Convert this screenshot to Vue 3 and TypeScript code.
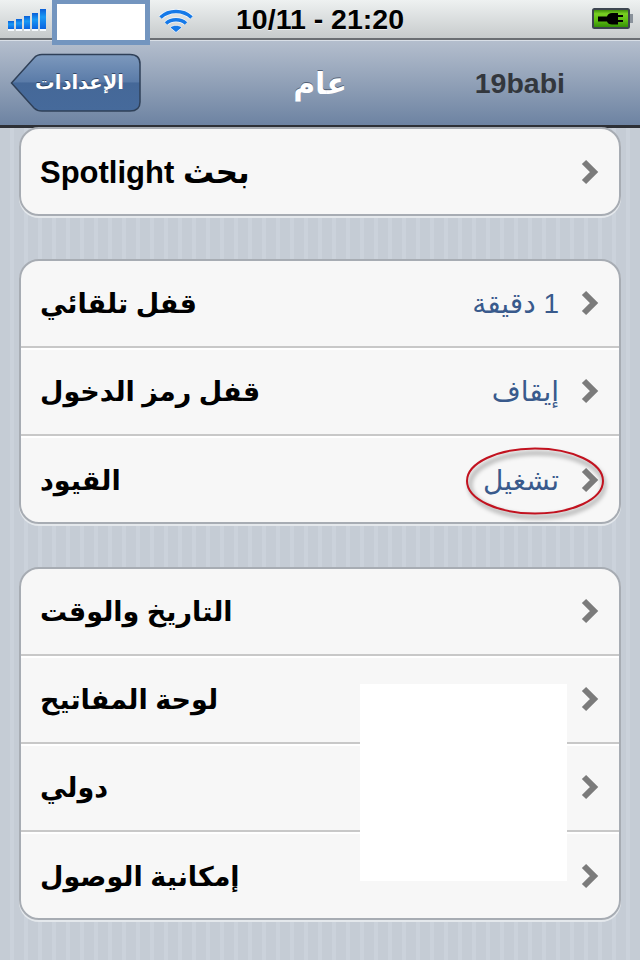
<script setup lang="ts">
interface Row {
  label: string
  value?: string
}

const groups: Row[][] = [
  [{ label: "بحث Spotlight" }],
  [
    { label: "قفل تلقائي", value: "1 دقيقة" },
    { label: "قفل رمز الدخول", value: "إيقاف" },
    { label: "القيود", value: "تشغيل" },
  ],
  [
    { label: "التاريخ والوقت" },
    { label: "لوحة المفاتيح" },
    { label: "دولي" },
    { label: "إمكانية الوصول" },
  ],
]

const bars = [
  { x: 8, y: 21 },
  { x: 16, y: 19 },
  { x: 24, y: 16 },
  { x: 32, y: 13 },
  { x: 40, y: 9 },
]
</script>

<template>
  <div class="phone">
    <header class="status">
      <svg class="signal" width="48" height="34" viewBox="0 0 48 34">
        <defs>
          <linearGradient id="barFill" x1="0" y1="0" x2="0" y2="1">
            <stop offset="0" stop-color="#0a5fd8" />
            <stop offset="0.4" stop-color="#1a9af5" />
            <stop offset="1" stop-color="#0a63e0" />
          </linearGradient>
        </defs>
        <g v-for="b in bars" :key="b.x">
          <rect :x="b.x" :y="b.y" width="6" :height="29 - b.y" fill="url(#barFill)" />
          <rect :x="b.x" y="29" width="6" height="2" fill="#f6fafd" />
        </g>
      </svg>
      <svg class="wifi" width="36" height="30" viewBox="0 0 36 30">
        <g fill="none" stroke="#f4f8fc" stroke-width="5">
          <path d="M2.500 11.500 C11 3.500 25 3.500 33.500 11.500" />
          <path d="M8 17.500 C13.500 12.500 22.500 12.500 28 17.500" />
        </g>
        <g fill="none" stroke="#1579e8" stroke-width="3.600">
          <path d="M2.500 11.500 C11 3.500 25 3.500 33.500 11.500" />
          <path d="M8 17.500 C13.500 12.500 22.500 12.500 28 17.500" />
        </g>
        <path d="M18 26.500 L12 21.500 C15.500 18.500 20.500 18.500 24 21.500 Z" fill="#1579e8" stroke="#f4f8fc" stroke-width="0.800" />
      </svg>
      <span class="time">10/11 - 21:20</span>
      <svg class="battery" width="42" height="22" viewBox="0 0 42 22">
        <defs>
          <linearGradient id="battFill" x1="0" y1="0" x2="0" y2="1">
            <stop offset="0" stop-color="#2f7d06" />
            <stop offset="0.25" stop-color="#79cf22" />
            <stop offset="0.6" stop-color="#5dbd12" />
            <stop offset="1" stop-color="#2f8a05" />
          </linearGradient>
        </defs>
        <rect x="1" y="1" width="36" height="19" rx="1.500" fill="url(#battFill)" stroke="#3d4550" stroke-width="2" />
        <rect x="38" y="6" width="3" height="9" fill="#8a929b" />
        <path d="M6 8.500 H15 Q16 5 20 5 H26 V7 H31 V9 H26 V12 H31 V14 H26 V16.500 H20 Q16 16.500 15 13.500 H6 Z" fill="#000" />
      </svg>
    </header>

    <nav class="nav">
      <button class="back" type="button">
        <svg class="back-shape" width="132" height="60" viewBox="0 0 132 60">
          <defs>
            <linearGradient id="backFill" x1="0" y1="0" x2="0" y2="1">
              <stop offset="0" stop-color="#7d99bd" />
              <stop offset="0.49" stop-color="#5a7ba8" />
              <stop offset="0.5" stop-color="#456898" />
              <stop offset="1" stop-color="#466a9b" />
            </linearGradient>
          </defs>
          <path
            d="M1.500 30 L24 5 Q27 1.500 32 1.500 H120 Q130 1.500 130 11 V49 Q130 58 120 58 H32 Q27 58 24 55 Z"
            fill="url(#backFill)"
            stroke="#2f4058"
            stroke-width="1.500"
          />
        </svg>
        <span class="back-label" dir="rtl">الإعدادات</span>
      </button>
      <h1 class="title" dir="rtl">عام</h1>
      <span class="owner">19babi</span>
    </nav>

    <main class="content">
      <section v-for="(group, i) in groups" :key="i" class="group">
        <div v-for="row in group" :key="row.label" class="row">
          <span class="label" :class="{ 'label-latin': i === 0 }" dir="rtl">{{ row.label }}</span>
          <span class="right">
            <span v-if="row.value" class="value" dir="rtl">{{ row.value }}</span>
            <svg class="chevron" width="18" height="26" viewBox="0 0 18 26">
              <path d="M3 3 L13 13 L3 23" fill="none" stroke="#7b7b7b" stroke-width="6" />
            </svg>
          </span>
        </div>
      </section>
    </main>

    <!-- things painted over the screenshot -->
    <div class="cover-status"></div>
    <div class="cover-list"></div>
    <svg class="circle" width="160" height="90" viewBox="0 0 160 90">
      <ellipse cx="82" cy="49" rx="67" ry="32" fill="none" stroke="#000" stroke-opacity="0.28" stroke-width="4" class="circle-shadow" />
      <ellipse cx="80" cy="45" rx="68" ry="32.500" fill="none" stroke="#c2121f" stroke-width="2" />
    </svg>
  </div>
</template>

<style>
html,
body {
  margin: 0;
  background: #c5ccd5;
}
</style>

<style scoped>
.phone {
  position: relative;
  width: 640px;
  height: 960px;
  overflow: hidden;
  display: flex;
  flex-direction: column;
  font-family: "Liberation Sans", "DejaVu Sans", sans-serif;
  background: repeating-linear-gradient(90deg, #c5ccd5 0 10px, #cbd2db 10px 14px);
}

.status {
  flex: none;
  height: 38px;
  position: relative;
  display: flex;
  align-items: center;
  background: linear-gradient(#eef1f1, #c7cbcc);
  border-bottom: 2px solid #6b6f73;
}

.signal {
  position: absolute;
  left: 0;
  top: 0;
}

.wifi {
  position: absolute;
  left: 158px;
  top: 6px;
}

.time {
  margin: 0 auto;
  padding-top: 1px;
  font-size: 28.5px;
  font-weight: 700;
  color: #000;
  text-shadow: 0 1px 0 rgba(255, 255, 255, 0.6);
}

.battery {
  position: absolute;
  left: 592px;
  top: 8px;
}

.nav {
  flex: none;
  height: 84px;
  display: grid;
  grid-template-columns: 1fr auto 1fr;
  align-items: center;
  padding: 0 10px;
  background: linear-gradient(#b4becd, #6d83a2);
  border-top: 1px solid #d9dfe7;
  border-bottom: 3px solid #2d3036;
}

.back {
  position: relative;
  justify-self: start;
  width: 132px;
  height: 60px;
  margin: -1px 0 0;
  padding: 0 17px 0 24px;
  border: 0;
  background: none;
  display: flex;
  align-items: center;
  justify-content: center;
  font-family: "DejaVu Sans", sans-serif;
}

.back-shape {
  position: absolute;
  left: 0;
  top: 0;
}

.back-label {
  position: relative;
  font-size: 19.5px;
  font-weight: 700;
  color: #fff;
  text-shadow: 0 -1px 0 rgba(30, 45, 70, 0.7);
}

.title {
  margin: 0;
  font-family: "DejaVu Sans", sans-serif;
  font-size: 30px;
  font-weight: 700;
  color: #fff;
  text-shadow: 0 -1px 0 rgba(40, 50, 70, 0.6);
}

.owner {
  justify-self: end;
  margin-right: 65px;
  font-size: 28.5px;
  font-weight: 700;
  color: #33373d;
}

.content {
  flex: 1;
  padding: 0 19px;
  display: flex;
  flex-direction: column;
  gap: 44px;
  min-height: 0;
}

.group {
  position: relative;
  background: #f7f7f7;
  border-radius: 20px;
  box-shadow: 0 2px 0 #e4e8ec;
}

.group::after {
  content: "";
  position: absolute;
  inset: -1px 0 0;
  border: 2px solid #a7acb3;
  border-radius: 20px;
  pointer-events: none;
}

.row {
  box-sizing: border-box;
  height: 88px;
  display: flex;
  align-items: center;
  justify-content: space-between;
  padding: 0 22px 0 21px;
  box-shadow: 0 2px 0 #fff inset;
  border-bottom: 2px solid #c8c8c8;
}

.row:first-child {
  box-shadow: none;
}

.row:last-child {
  border-bottom: 0;
}

.label {
  padding-top: 2px;
  font-family: "Liberation Sans", "DejaVu Sans", sans-serif;
  font-size: 27px;
  font-weight: 700;
  color: #000;
}

.label-latin {
  padding-top: 0;
  font-size: 31px;
}

.right {
  display: flex;
  align-items: center;
  gap: 22px;
}

.value {
  font-family: "Liberation Sans", "DejaVu Sans", sans-serif;
  font-size: 28px;
  color: #395a8c;
}

.cover-status {
  position: absolute;
  left: 52px;
  top: -1px;
  box-sizing: border-box;
  width: 98px;
  height: 46px;
  background: #fff;
  border: 5px solid #7395bf;
}

.cover-list {
  position: absolute;
  left: 360px;
  top: 684px;
  width: 207px;
  height: 197px;
  background: #fff;
}

.circle {
  position: absolute;
  left: 455px;
  top: 436px;
}

.circle-shadow {
  filter: blur(2px);
}
</style>
